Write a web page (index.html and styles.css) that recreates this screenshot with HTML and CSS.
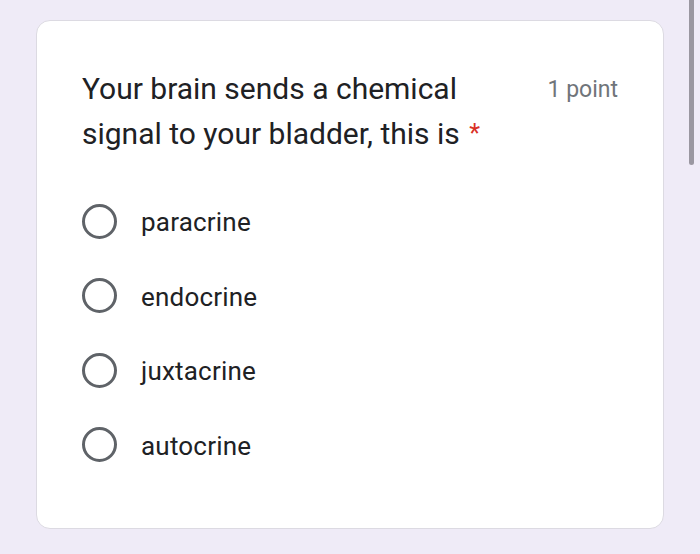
FILE: index.html
```html
<!DOCTYPE html>
<html>
<head>
<meta charset="utf-8">
<link rel="stylesheet" href="styles.css">
</head>
<body>
<div class="page">
  <div class="card">
    <div class="header">
      <div class="question">Your brain sends a chemical signal to your bladder, this is <span class="req">*</span></div>
      <div class="points">1 point</div>
    </div>
    <div class="options">
      <label class="option"><span class="radio"></span><span class="label">paracrine</span></label>
      <label class="option"><span class="radio"></span><span class="label">endocrine</span></label>
      <label class="option"><span class="radio"></span><span class="label">juxtacrine</span></label>
      <label class="option"><span class="radio"></span><span class="label">autocrine</span></label>
    </div>
  </div>
</div>
<div class="scrollbar"></div>
</body>
</html>
```
FILE: styles.css
```css
html, body {
  margin: 0;
  padding: 0;
  background: #efebf7;
  font-family: Roboto, "Noto Sans", Arial, sans-serif;
}
.page {
  padding: 20px 36px 0 36px;
  height: 554px;
  box-sizing: border-box;
}
.card {
  width: 628px;
  height: 509px;
  box-sizing: border-box;
  background: #ffffff;
  border: 1.5px solid #dcdae2;
  border-radius: 14px;
  padding: 45px 46px 0 45px;
}
.header {
  display: flex;
  justify-content: space-between;
  align-items: flex-start;
  gap: 30px;
}
.question {
  flex: 1;
  font-size: 30px;
  line-height: 45px;
  color: #202124;
}
.req {
  color: #d93025;
  font-size: 25px;
  vertical-align: 2px;
  margin-left: 2px;
}
.points {
  font-size: 23px;
  line-height: 45px;
  color: #70757a;
  padding-top: 1px;
  margin-right: -1px;
}
.options {
  margin-top: 28px;
  display: flex;
  flex-direction: column;
}
.option {
  height: 74.5px;
  display: flex;
  align-items: center;
}
.radio {
  width: 35px;
  height: 35px;
  box-sizing: border-box;
  border: 3.5px solid #5f6368;
  border-radius: 50%;
  margin-right: 24px;
  flex: none;
}
.label {
  font-size: 26px;
  color: #202124;
  padding-top: 2px;
  letter-spacing: 0.2px;
}
.scrollbar {
  position: absolute;
  left: 689px;
  top: 0;
  width: 5px;
  height: 165px;
  background: #9a97a1;
  border-radius: 0 0 3px 3px;
}
```
